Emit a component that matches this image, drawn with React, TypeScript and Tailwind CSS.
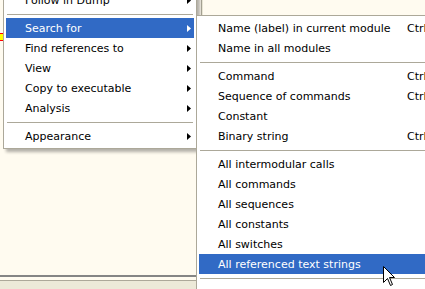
import React from "react";

type Item = { label?: string; key?: string; sub?: boolean; active?: boolean; sep?: boolean };

const mainItems: Item[] = [
  { label: "Follow in Dump", sub: true },
  { sep: true },
  { label: "Search for", sub: true, active: true },
  { label: "Find references to", sub: true },
  { label: "View", sub: true },
  { label: "Copy to executable", sub: true },
  { label: "Analysis", sub: true },
  { sep: true },
  { label: "Appearance", sub: true },
];

const subItems: Item[] = [
  { label: "Name (label) in current module", key: "Ctrl+N" },
  { label: "Name in all modules" },
  { sep: true },
  { label: "Command", key: "Ctrl+F" },
  { label: "Sequence of commands", key: "Ctrl+S" },
  { label: "Constant" },
  { label: "Binary string", key: "Ctrl+B" },
  { sep: true },
  { label: "All intermodular calls" },
  { label: "All commands" },
  { label: "All sequences" },
  { label: "All constants" },
  { label: "All switches" },
  { label: "All referenced text strings", active: true },
  { sep: true },
];

const Arrow = ({ white }: { white?: boolean }) => (
  <svg width="4" height="7" viewBox="0 0 4 7" className="shrink-0">
    <path d="M0 0 L4 3.5 L0 7 Z" fill={white ? "#ffffff" : "#000000"} />
  </svg>
);

const Row = ({ item, labelWidth }: { item: Item; labelWidth?: string }) => {
  if (item.sep)
    return (
      <div className="h-[8px] flex items-center px-[1px]">
        <div className="h-px w-full bg-[#aca899]" />
      </div>
    );
  return (
    <div
      className={
        "h-[20px] flex items-center pl-[19px] whitespace-nowrap " +
        (item.active ? "bg-[#316ac5] text-white" : "text-black")
      }
    >
      <span className={labelWidth ? labelWidth + " shrink-0" : "flex-1"}>{item.label}</span>
      {item.key && <span>{item.key}</span>}
      {item.sub && (
        <span className="pr-[3px]">
          <Arrow white={item.active} />
        </span>
      )}
    </div>
  );
};

const Cursor = () => (
  <svg width="13" height="21" viewBox="0 0 13 21">
    <polygon
      points="0.5,0.5 0.5,16.5 4.5,12.5 7.5,19.5 9.5,18.5 6.5,11.5 11.5,11.5"
      fill="#ffffff"
      stroke="#000000"
      strokeWidth="1"
      strokeLinejoin="miter"
    />
  </svg>
);

export default function App() {
  return (
    <div
      className="relative w-[425px] h-[289px] overflow-hidden bg-[#fffbf0] text-[11px] leading-none"
      style={{ fontFamily: '"DejaVu Sans", Verdana, sans-serif' }}
    >
      {/* window behind the menus */}
      <div className="flex h-full">
        <div className="w-[196px] flex flex-col">
          <div className="flex-1 pt-[33px]">
            <div className="w-[3px] h-[8px] bg-[#ffff00] border-y border-[#ff0000]" />
          </div>
          <div className="h-[2px] bg-[#858585]" />
          <div className="h-[3px]" />
          <div className="h-px bg-[#aca899]" />
          <div className="h-[8px] bg-[#ece9d8]" />
        </div>
        <div className="w-px bg-[#aca899]" />
        <div className="flex-1 flex">
          <div className="w-[4px]" />
          <div className="w-px bg-[#aca899]" />
          <div className="w-px bg-[#ece9d8]" />
          <div className="flex-1" />
        </div>
      </div>

      {/* main context menu */}
      <div className="absolute left-[3px] top-[-13px] w-[194px] bg-white border border-[#aca899] p-[2px] shadow-[3px_3px_3px_rgba(0,0,0,0.3)]">
        {mainItems.map((it, i) => (
          <Row key={i} item={it} />
        ))}
      </div>

      {/* submenu */}
      <div className="absolute left-[196px] top-[15px] w-[260px] h-[300px] bg-white border border-[#aca899] p-[2px] shadow-[3px_3px_3px_rgba(0,0,0,0.3)]">
        {subItems.map((it, i) => (
          <Row key={i} item={it} labelWidth="w-[189px]" />
        ))}
      </div>

      <div className="absolute left-[383px] top-[266px]">
        <Cursor />
      </div>
    </div>
  );
}
